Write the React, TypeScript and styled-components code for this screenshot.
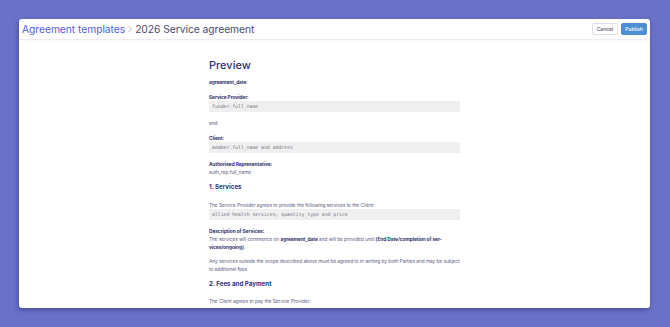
import styled, { createGlobalStyle } from "styled-components";

const GlobalStyle = createGlobalStyle`
  html, body {
    margin: 0;
    padding: 0;
    background-color: #6a71c9;
    font-family: Inter, "Noto Sans", sans-serif;
  }
`;

const Page = styled.div`
  box-sizing: border-box;
  width: 670px;
  height: 327px;
  padding: 19px 20px 19px 19px;
  background-color: #6a71c9;
`;

const Card = styled.div`
  display: flex;
  flex-direction: column;
  height: 100%;
  background-color: #ffffff;
  border-radius: 3px;
  box-shadow: -1px 2px 5px rgba(32, 34, 92, 0.45);
  overflow: hidden;
`;

const Header = styled.header`
  display: flex;
  align-items: center;
  justify-content: space-between;
  height: 20px;
  padding: 0 3px 0 3px;
  border-bottom: 1px solid #ececf1;
  box-shadow: 0 1px 2px rgba(0, 0, 0, 0.03);
  flex-shrink: 0;
`;

const Breadcrumb = styled.nav`
  display: flex;
  align-items: center;
  gap: 2px;
  font-size: 10.3px;
  letter-spacing: -0.05px;
  line-height: 20px;
`;

const Crumb = styled.span<{ $current?: boolean }>`
  color: ${(p) => (p.$current ? "#4a4b6e" : "#4e5fd6")};
`;

const Actions = styled.div`
  display: flex;
  gap: 3px;
`;

const Button = styled.button<{ $primary?: boolean }>`
  box-sizing: border-box;
  width: 26px;
  height: 12px;
  padding: 0;
  font-family: Inter, sans-serif;
  font-size: 5px;
  font-weight: 500;
  border-radius: 2px;
  border: 1px solid ${(p) => (p.$primary ? "#4a8fd4" : "#dedee6")};
  background-color: ${(p) => (p.$primary ? "#4a8fd4" : "#ffffff")};
  color: ${(p) => (p.$primary ? "#ffffff" : "#50516e")};
`;

const Body = styled.main`
  flex: 1;
  overflow: hidden;
  display: flex;
  justify-content: center;
  padding-top: 18px;
`;

const Doc = styled.article`
  width: 251px;
  display: flex;
  flex-direction: column;
  color: #5c5d86;
  font-size: 4.8px;
  letter-spacing: -0.05px;
  line-height: 8px;
`;

const Title = styled.h1`
  margin: 0 0 6px;
  font-size: 11px;
  line-height: 14px;
  font-weight: 500;
  letter-spacing: 0;
  color: #2e3078;
`;

const SectionTitle = styled.h2<{ $after?: number }>`
  margin: 0 0 ${(p) => p.$after ?? 9}px;
  font-size: 6.2px;
  line-height: 10px;
  font-weight: 700;
  letter-spacing: 0;
  color: #2e3078;
`;

const Label = styled.div`
  font-weight: 700;
  color: #2e2f6a;
`;

const Para = styled.p<{ $after?: number }>`
  margin: 0 0 ${(p) => p.$after ?? 6}px;
`;

const Strong = styled.strong`
  font-weight: 700;
  color: #2e2f6a;
`;

const CodeBox = styled.div`
  box-sizing: border-box;
  height: 11px;
  margin: 0 0 7px;
  padding: 0 3px;
  background-color: #efeff0;
  font-family: "DejaVu Sans Mono", "Liberation Mono", monospace;
  font-size: 4.8px;
  letter-spacing: 0;
  line-height: 11px;
  color: #73737f;
`;

function Chevron() {
  return (
    <svg width="6" height="8" viewBox="0 0 6 8" fill="none">
      <path d="M1.5 1 L4.5 4 L1.5 7" stroke="#a9aab8" strokeWidth="0.9" />
    </svg>
  );
}

export default function App() {
  return (
    <Page>
      <GlobalStyle />
      <Card>
        <Header>
          <Breadcrumb>
            <Crumb>Agreement templates</Crumb>
            <Chevron />
            <Crumb $current>2026 Service agreement</Crumb>
          </Breadcrumb>
          <Actions>
            <Button>Cancel</Button>
            <Button $primary>Publish</Button>
          </Actions>
        </Header>
        <Body>
          <Doc>
            <Title>Preview</Title>
            <Para $after={7}>
              <Strong>agreement_date</Strong>
            </Para>

            <Label>Service Provider:</Label>
            <CodeBox>funder.full_name</CodeBox>

            <Para $after={7}>and</Para>

            <Label>Client:</Label>
            <CodeBox>member.full_name and address</CodeBox>

            <Label>Authorised Representative:</Label>
            <Para>auth_rep.full_name</Para>

            <SectionTitle>1. Services</SectionTitle>
            <Para $after={0}>
              The Service Provider agrees to provide the following services to the Client:
            </Para>
            <CodeBox>allied health services, quantity_type and price</CodeBox>

            <Label>Description of Services:</Label>
            <Para>
              The services will commence on <Strong>agreement_date</Strong> and will be
              provided until <Strong>[End Date/completion of ser-</Strong>
              <br />
              <Strong>vices/ongoing]</Strong>.
            </Para>

            <Para>
              Any services outside the scope described above must be agreed to in writing
              by both Parties and may be subject to additional fees.
            </Para>

            <SectionTitle $after={8}>2. Fees and Payment</SectionTitle>
            <Para>The Client agrees to pay the Service Provider:</Para>
          </Doc>
        </Body>
      </Card>
    </Page>
  );
}
